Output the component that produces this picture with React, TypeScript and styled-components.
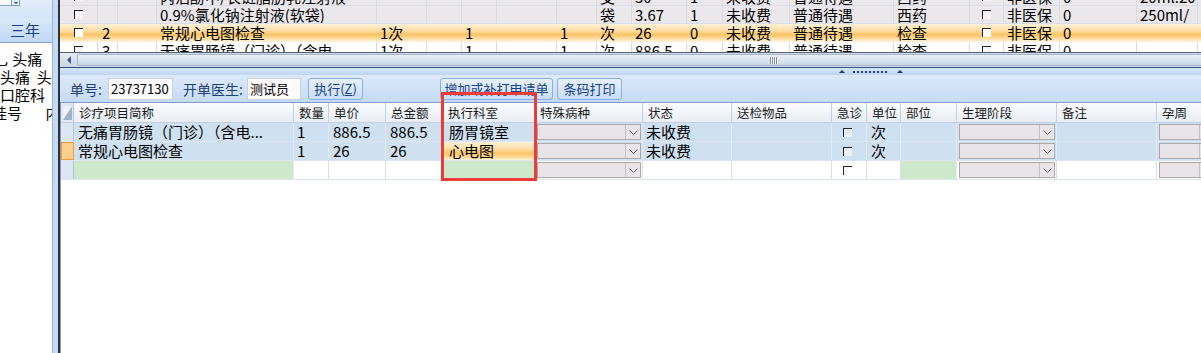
import styled, { createGlobalStyle } from "styled-components";

const GlobalStyle = createGlobalStyle`
  html, body {
    margin: 0;
    padding: 0;
    background: #fff;
  }
  body {
    font-family: "Noto Sans CJK SC", "Noto Sans", sans-serif;
    font-size: 15px;
    color: #000;
  }
`;

type Tone = "gray" | "hot" | "white";

interface ITopRow {
  tone: Tone;
  cells: string[];
}

// column widths of the upper (prescription) grid
const topCols = [38, 20, 39, 220, 50, 35, 35, 60, 40, 35, 55, 36, 67, 104, 76, 34, 56, 77, 61, 40];
const CHK = "__chk__";

const topRows: ITopRow[] = [
  {
    tone: "gray",
    cells: [CHK, "", "", "丙泊酚中/长链脂肪乳注射液", "", "", "", "", "", "支", "30", "1", "未收费", "普通待遇", "西药", CHK, "非医保", "0", "20ml:20", ""],
  },
  {
    tone: "gray",
    cells: [CHK, "", "", "0.9%氯化钠注射液(软袋)", "", "", "", "", "", "袋", "3.67", "1", "未收费", "普通待遇", "西药", CHK, "非医保", "0", "250ml/", ""],
  },
  {
    tone: "hot",
    cells: [CHK, "2", "", "常规心电图检查", "1次", "", "1", "", "1", "次", "26", "0", "未收费", "普通待遇", "检查", CHK, "非医保", "0", "", ""],
  },
  {
    tone: "white",
    cells: [CHK, "3", "", "无痛胃肠镜（门诊）（含电", "1次", "", "1", "", "1", "次", "886.5", "0", "未收费", "普通待遇", "检查", CHK, "非医保", "0", "", ""],
  },
];

// lower (request) grid
const lowCols = [13, 220, 35, 57, 57, 92, 108, 89, 100, 35, 34, 56, 100, 100, 60];
const lowHeads = ["", "诊疗项目简称", "数量", "单价", "总金额", "执行科室", "特殊病种", "状态", "送检物品", "急诊", "单位", "部位", "生理阶段", "备注", "孕周"];

type CellTone = "blue" | "white" | "green" | "hot";
type CellKind = "text" | "drop" | "chk";

interface ILowCell {
  text?: string;
  kind?: CellKind;
  tone?: CellTone;
  pad?: number;
}

interface ILowRow {
  current: boolean;
  cells: ILowCell[];
}

const lowRows: ILowRow[] = [
  {
    current: false,
    cells: [
      { text: "无痛胃肠镜（门诊）（含电..." },
      { text: "1", pad: 3 },
      { text: "886.5" },
      { text: "886.5" },
      { text: "肠胃镜室", pad: 6 },
      { kind: "drop" },
      { text: "未收费", pad: 3 },
      {},
      { kind: "chk" },
      { text: "次" },
      {},
      { kind: "drop" },
      {},
      { kind: "drop" },
    ],
  },
  {
    current: true,
    cells: [
      { text: "常规心电图检查" },
      { text: "1", pad: 3 },
      { text: "26" },
      { text: "26" },
      { text: "心电图", pad: 6, tone: "hot" },
      { kind: "drop" },
      { text: "未收费", pad: 3 },
      {},
      { kind: "chk" },
      { text: "次" },
      {},
      { kind: "drop" },
      {},
      { kind: "drop" },
    ],
  },
  {
    current: false,
    cells: [
      { tone: "green" },
      { tone: "white" },
      { tone: "white" },
      { tone: "white" },
      { tone: "green" },
      { kind: "drop", tone: "white" },
      { tone: "white" },
      { tone: "white" },
      { kind: "chk", tone: "white" },
      { tone: "white" },
      { tone: "green" },
      { kind: "drop", tone: "white" },
      { tone: "white" },
      { kind: "drop", tone: "white" },
    ],
  },
];

const leftLines = [
  { text: "乚 头痛", offset: -6 },
  { text: "头痛  头", offset: 0 },
  { text: "口腔科", offset: 0 },
  { text: "挂号       内科", offset: -8 },
];

const hotGradient =
  "linear-gradient(to bottom, #fff1da 0%, #fedda2 40%, #fcc467 62%, #fdd895 82%, #fff0d4 100%)";

const toCols = (cols: number[]) => cols.map((c) => `${c}px`).join(" ");

const App = () => {
  return (
    <>
      <GlobalStyle />
      <Screen>
        <LeftPanel>
          <PanelTop>
            <ComboField />
            <ComboButton>
              <ComboArrow />
            </ComboButton>
          </PanelTop>
          <YearTab>三年</YearTab>
          <LeftList>
            {leftLines.map((line, i) => (
              <LeftLine key={i} offset={line.offset}>
                {line.text}
              </LeftLine>
            ))}
          </LeftList>
        </LeftPanel>
        <Strip />

        <Main>
          <TopGrid>
            <TopRows>
              {topRows.map((row, r) => (
                <TopRow key={r} tone={row.tone} cols={toCols(topCols)}>
                  {row.cells.map((cell, c) =>
                    cell === CHK ? (
                      <TopCell key={c} tone={row.tone} pad={c === 0 ? 14 : 12}>
                        <CheckBox bg={row.tone === "hot" ? "#ffffff" : "#f6f4f6"} />
                      </TopCell>
                    ) : (
                      <TopCell key={c} tone={row.tone} pad={c === 1 ? 4 : 3}>
                        {cell}
                      </TopCell>
                    )
                  )}
                </TopRow>
              ))}
            </TopRows>
          </TopGrid>

          <HScroll>
            <ScrollArrow>
              <ArrowLeft />
            </ScrollArrow>
            <ScrollThumb>
              <Grip />
            </ScrollThumb>
          </HScroll>

          <Splitter>
            <GripTri />
            <GripDots />
            <GripTri />
          </Splitter>

          <Toolbar>
            <ToolLabel w={38}>单号:</ToolLabel>
            <ToolField w={65}>23737130</ToolField>
            <ToolLabel w={64} gap={10}>
              开单医生:
            </ToolLabel>
            <ToolField w={54}>测试员</ToolField>
            <ToolButton w={55} gap={7}>
              执行(<u>Z</u>)
            </ToolButton>
            <ToolButton w={113} gap={77}>
              增加或补打申请单
            </ToolButton>
            <ToolButton w={65} gap={4}>
              条码打印
            </ToolButton>
          </Toolbar>

          <LowerGrid>
            <HeaderRow cols={toCols(lowCols)}>
              {lowHeads.map((h, i) =>
                i === 0 ? (
                  <CornerCell key={i}>
                    <svg width="12" height="19" viewBox="0 0 12 19">
                      <polygon points="2,17 11,17 11,3" fill="#9cb2d0" />
                      <polygon points="2,17 11,3 2,3" fill="#eef2f8" />
                    </svg>
                  </CornerCell>
                ) : (
                  <HeadCell key={i}>{h}</HeadCell>
                )
              )}
            </HeaderRow>
            {lowRows.map((row, r) => (
              <BodyRow key={r} cols={toCols(lowCols)}>
                <IndicatorCell current={row.current} />
                {row.cells.map((cell, c) => {
                  const tone = cell.tone ?? "blue";
                  if (cell.kind === "drop") {
                    return (
                      <BodyCell key={c} tone={tone} pad={0}>
                        <Dropdown>
                          <DropBody />
                          <DropButton>
                            <svg width="9" height="5" viewBox="0 0 9 5">
                              <polyline points="0.5,0.5 4.5,4.5 8.5,0.5" fill="none" stroke="#666" strokeWidth="1" />
                            </svg>
                          </DropButton>
                        </Dropdown>
                      </BodyCell>
                    );
                  }
                  if (cell.kind === "chk") {
                    return (
                      <BodyCell key={c} tone={tone} pad={11}>
                        <CheckBox bg={tone === "white" ? "#ffffff" : "#e8f1f9"} />
                      </BodyCell>
                    );
                  }
                  return (
                    <BodyCell key={c} tone={tone} pad={cell.pad ?? 4}>
                      {cell.text}
                    </BodyCell>
                  );
                })}
              </BodyRow>
            ))}
          </LowerGrid>

          {/* red marking around the 执行科室 column */}
          <Marker />
        </Main>
      </Screen>
    </>
  );
};

export default App;

const Screen = styled.div`
  display: flex;
  width: 1201px;
  height: 353px;
  overflow: hidden;
  background: #fff;
`;

/* ---------- left side panel ---------- */

const LeftPanel = styled.div`
  width: 52px;
  flex-shrink: 0;
  display: flex;
  flex-direction: column;
  background: #fff;
  border-right: 1px solid #9db3d1;
  overflow: hidden;
`;

const PanelTop = styled.div`
  height: 18px;
  display: flex;
  align-items: flex-start;
  background: linear-gradient(to bottom, #e3edfb, #d3e3f8);
`;

const ComboField = styled.div`
  width: 11px;
  height: 5px;
  background: #f7fafe;
  border-bottom: 1px solid #8aa6cc;
`;

const ComboButton = styled.div`
  width: 7px;
  height: 5px;
  border: 1px solid #7f9cc6;
  border-top: none;
  background: #e4eefb;
  display: flex;
  align-items: center;
  justify-content: center;
`;

const ComboArrow = styled.span`
  width: 0;
  height: 0;
  border-left: 2px solid transparent;
  border-right: 2px solid transparent;
  border-top: 2px solid #1d3f78;
`;

const YearTab = styled.div`
  height: 25px;
  box-sizing: border-box;
  padding-left: 10px;
  line-height: 24px;
  font-size: 15px;
  color: #15428b;
  background: linear-gradient(to bottom, #dbe9fb, #c0d8f6);
  border-bottom: 1px solid #7fa2cf;
`;

const LeftList = styled.div`
  padding-top: 7px;
  white-space: pre;
  overflow: hidden;
`;

const LeftLine = styled.div<{ offset: number }>`
  height: 18px;
  line-height: 18px;
  font-size: 15px;
  margin-left: ${(props) => props.offset}px;
`;

const Strip = styled.div`
  width: 5px;
  flex-shrink: 0;
  background: #c5dbf5;
  border-right: 2px solid #2c323c;
`;

/* ---------- main area ---------- */

const Main = styled.div`
  flex: 1;
  min-width: 0;
  position: relative;
  display: flex;
  flex-direction: column;
  overflow: hidden;
`;

const TopGrid = styled.div`
  height: 52px;
  flex-shrink: 0;
  overflow: hidden;
  background: #fff;
`;

const TopRows = styled.div`
  margin-top: -12px;
`;

const TopRow = styled.div<{ tone: Tone; cols: string }>`
  display: grid;
  grid-template-columns: ${(props) => props.cols};
  height: 18px;
  box-sizing: border-box;
  border-bottom: 1px solid ${(props) => (props.tone === "hot" ? "transparent" : "#d9dde6")};
  background: ${(props) =>
    props.tone === "hot" ? hotGradient : props.tone === "gray" ? "#ebe8ec" : "#ffffff"};
`;

const TopCell = styled.div<{ tone: Tone; pad: number }>`
  display: flex;
  align-items: center;
  padding-left: ${(props) => props.pad}px;
  border-right: 1px solid ${(props) => (props.tone === "hot" ? "transparent" : "#d6dbe5")};
  font-size: 15px;
  line-height: 17px;
  white-space: nowrap;
  overflow: hidden;
`;

const CheckBox = styled.span<{ bg: string }>`
  display: inline-block;
  width: 9px;
  height: 9px;
  box-sizing: border-box;
  border-top: 1px solid #222;
  border-left: 1px solid #222;
  background: ${(props) => props.bg};
`;

const HScroll = styled.div`
  height: 14px;
  flex-shrink: 0;
  display: flex;
  border-top: 1px solid #56606f;
  background: #d3dce9;
`;

const ScrollArrow = styled.div`
  width: 17px;
  display: flex;
  align-items: center;
  justify-content: center;
  background: linear-gradient(to bottom, #e6ecf5, #c8d4e5);
`;

const ArrowLeft = styled.span`
  width: 0;
  height: 0;
  border-top: 4px solid transparent;
  border-bottom: 4px solid transparent;
  border-right: 4px solid #42577a;
`;

const ScrollThumb = styled.div`
  flex: 1;
  margin: 1px 0;
  padding-left: 692px;
  display: flex;
  align-items: center;
  border: 1px solid #a3b5cd;
  border-right: none;
  border-radius: 2px 0 0 2px;
  background: linear-gradient(to bottom, #eaf0f8, #cbd7e8);
`;

const Grip = styled.span`
  width: 8px;
  height: 7px;
  background: repeating-linear-gradient(to right, #7d8ea8 0 1px, #f4f7fb 1px 2px);
`;

const Splitter = styled.div`
  height: 7px;
  flex-shrink: 0;
  display: flex;
  align-items: center;
  padding-left: 779px;
  border-top: 1px solid #2e4f80;
  background: linear-gradient(to bottom, #d6e5f8, #bfd5f1);
`;

const GripTri = styled.span`
  width: 0;
  height: 0;
  border-left: 3px solid transparent;
  border-right: 3px solid transparent;
  border-bottom: 3px solid #203a66;
`;

const GripDots = styled.span`
  width: 35px;
  height: 2px;
  margin: 0 9px 0 8px;
  background: repeating-linear-gradient(to right, #203a66 0 2px, transparent 2px 4px);
`;

const Toolbar = styled.div`
  height: 28px;
  box-sizing: border-box;
  flex-shrink: 0;
  display: flex;
  align-items: center;
  padding-left: 10px;
  border-bottom: 1px solid #7b9ccb;
  background: linear-gradient(to bottom, #dde9fa, #c5dbf6);
`;

const ToolLabel = styled.span<{ w: number; gap?: number }>`
  width: ${(props) => props.w}px;
  margin-left: ${(props) => props.gap ?? 0}px;
  flex-shrink: 0;
  font-size: 14px;
  color: #1f3f7a;
  white-space: nowrap;
`;

const ToolField = styled.div<{ w: number }>`
  width: ${(props) => props.w}px;
  height: 22px;
  box-sizing: border-box;
  flex-shrink: 0;
  padding: 1px 2px;
  font-size: 13px;
  line-height: 18px;
  background: #fcfafc;
  border: 1px solid #c8d4e6;
  white-space: nowrap;
  overflow: hidden;
`;

const ToolButton = styled.div<{ w: number; gap: number }>`
  width: ${(props) => props.w}px;
  margin-left: ${(props) => props.gap}px;
  height: 22px;
  box-sizing: border-box;
  flex-shrink: 0;
  text-align: center;
  font-size: 13px;
  line-height: 20px;
  color: #15428b;
  border: 1px solid #8aaede;
  border-radius: 3px;
  background: linear-gradient(to bottom, #e8f1fc, #c8dcf7);
  white-space: nowrap;
`;

const LowerGrid = styled.div`
  flex: 1;
  background: #fff;
  border-left: 1px solid #8a9ab3;
  overflow: hidden;
`;

const HeaderRow = styled.div<{ cols: string }>`
  display: grid;
  grid-template-columns: ${(props) => props.cols};
  height: 20px;
  box-sizing: border-box;
  border-bottom: 1px solid #c4cfdf;
  background: linear-gradient(to bottom, #fbfcfe, #e8edf5);
`;

const CornerCell = styled.div`
  display: flex;
  align-items: center;
  border-right: 1px solid #b8c6da;
  background: #dfe7f2;
`;

const HeadCell = styled.div`
  padding-left: 5px;
  border-right: 1px solid #c4cfe0;
  font-size: 12.5px;
  line-height: 19px;
  color: #1b1b1b;
  white-space: nowrap;
  overflow: hidden;
`;

const BodyRow = styled.div<{ cols: string }>`
  display: grid;
  grid-template-columns: ${(props) => props.cols};
  height: 19px;
  box-sizing: border-box;
  border-bottom: 1px solid #dfe5ee;
`;

const IndicatorCell = styled.div<{ current: boolean }>`
  box-sizing: border-box;
  background: ${(props) => (props.current ? "#fed08a" : "#dce6f2")};
  border: ${(props) => (props.current ? "1px solid #e99c42" : "none")};
  border-right: 1px solid ${(props) => (props.current ? "#e99c42" : "#b3c3d9")};
`;

const cellBg = (tone: CellTone) => {
  switch (tone) {
    case "hot":
      return hotGradient;
    case "green":
      return "#cde8ca";
    case "white":
      return "#ffffff";
    default:
      return "#cfe0f0";
  }
};

const BodyCell = styled.div<{ tone: CellTone; pad: number }>`
  display: flex;
  align-items: center;
  padding-left: ${(props) => props.pad}px;
  background: ${(props) => cellBg(props.tone)};
  border-right: 1px solid ${(props) => (props.tone === "white" ? "#d9dfe9" : "#e3eaf3")};
  font-size: 15px;
  line-height: 18px;
  white-space: nowrap;
  overflow: hidden;
`;

const Dropdown = styled.div`
  flex: 1;
  align-self: stretch;
  margin: 1px 1px 1px 2px;
  display: flex;
  border: 1px solid #a9a9a9;
  background: #e8e4e8;
`;

const DropBody = styled.div`
  flex: 1;
`;

const DropButton = styled.div`
  width: 14px;
  display: flex;
  align-items: center;
  justify-content: center;
  border-left: 1px solid #c2c2c2;
`;

const Marker = styled.div`
  position: absolute;
  left: 381px;
  top: 92px;
  width: 96px;
  height: 89px;
  box-sizing: border-box;
  border: 3px solid #ec3b3b;
  pointer-events: none;
`;
